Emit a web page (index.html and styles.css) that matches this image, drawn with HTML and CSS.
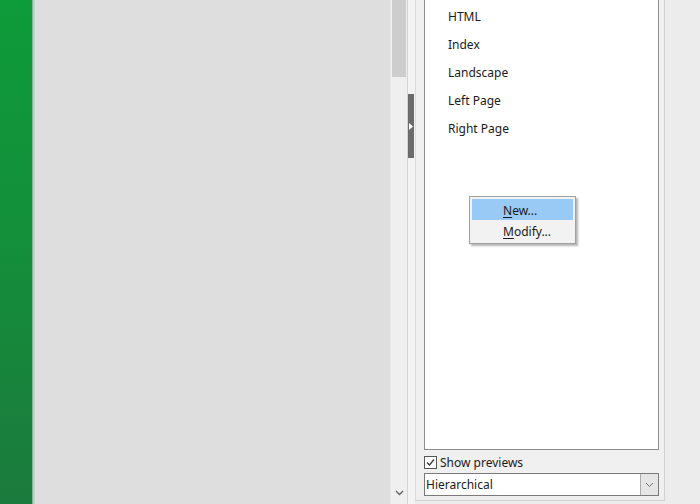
FILE: index.html
```html
<!DOCTYPE html>
<html lang="en">
<head>
    <meta charset="UTF-8">
    <title>Styles</title>
    <link rel="stylesheet" href="styles.css">
</head>
<body>
    <div class="window">
        <div class="ribbon-edge"></div>
        <div class="ribbon-line"></div>
        <div class="doc-area"></div>

        <div class="vscroll">
            <div class="thumb"></div>
            <div class="track"></div>
            <svg class="scroll-arrow" width="9" height="6" viewBox="0 0 9 6">
                <path d="M1 1 L4.5 4.5 L8 1" fill="none" stroke="#606060" stroke-width="1.3"/>
            </svg>
        </div>

        <div class="splitter">
            <div class="grip">
                <svg width="4" height="7" viewBox="0 0 4 7"><path d="M0 0 L4 3.5 L0 7 Z" fill="#fff"/></svg>
            </div>
        </div>

        <div class="sidebar">
            <div class="group">
                <ul class="style-list">
                    <li>HTML</li>
                    <li>Index</li>
                    <li>Landscape</li>
                    <li>Left Page</li>
                    <li>Right Page</li>
                </ul>

                <label class="check-row">
                    <span class="checkbox">
                        <svg width="11" height="11" viewBox="0 0 11 11"><path d="M2 5.5 L4.5 8 L9 2.5" fill="none" stroke="#333" stroke-width="1.2"/></svg>
                    </span>
                    Show previews
                </label>

                <div class="combo">
                    <span class="combo-value">Hierarchical</span>
                    <span class="combo-btn">
                        <svg width="9" height="6" viewBox="0 0 9 6"><path d="M1 1 L4.5 4.5 L8 1" fill="none" stroke="#707070" stroke-width="1"/></svg>
                    </span>
                </div>
            </div>
            <div class="sidebar-rest"></div>

            <div class="context-menu">
                <div class="menu-item active"><u>N</u>ew...</div>
                <div class="menu-item"><u>M</u>odify...</div>
            </div>
        </div>
    </div>
</body>
</html>
```

FILE: styles.css
```css
body {
    margin: 0;
    font-family: "Noto Sans", "Open Sans", sans-serif;
    font-size: 12px;
    color: #1a1a1a;
}

.window {
    display: flex;
    width: 700px;
    height: 504px;
    overflow: hidden;
    background: #f0f0f0;
}

.ribbon-edge {
    width: 32px;
    background: linear-gradient(to bottom, #0e9b3a 0%, #148e3a 50%, #1b7a3d 100%);
}

.ribbon-line {
    width: 3px;
    background: linear-gradient(to right, #6fa883, #b7cdbf, #d6d6d6);
}

.doc-area {
    width: 355px;
    background: #dedede;
}

/* Scrollbar */
.vscroll {
    position: relative;
    width: 17px;
    display: flex;
    flex-direction: column;
    background: #efefef;
    border-left: 1px solid #e6e6e6;
    box-sizing: border-box;
}

.thumb {
    height: 77px;
    margin: 0 1px;
    background: #cdcdcd;
}

.track {
    flex: 1;
}

.scroll-arrow {
    position: absolute;
    bottom: 8px;
    left: 4px;
}

/* Splitter */
.splitter {
    width: 8px;
    display: flex;
    flex-direction: column;
    padding-top: 94px;
    box-sizing: border-box;
    background: #f3f3f3;
    border-left: 1px solid #d4d4d4;
}

.grip {
    width: 6px;
    height: 64px;
    background: #6b6b6b;
    display: flex;
    align-items: center;
    padding-left: 1px;
    box-sizing: border-box;
}

/* Sidebar */
.sidebar {
    position: relative;
    flex: 1;
    display: flex;
    background: #ececec;
}

.group {
    width: 250px;
    height: 501px;
    display: flex;
    flex-direction: column;
    padding: 0 5px 0 8px;
    box-sizing: border-box;
    background: #f0f0f0;
    border-left: 1px solid #dadada;
    border-right: 1px solid #d2d2d2;
    border-bottom: 1px solid #d2d2d2;
}

.style-list {
    list-style: none;
    margin: -2px 0 0;
    padding: 4px 0 0 23px;
    height: 452px;
    box-sizing: border-box;
    background: #fff;
    border: 1px solid #8c8c8c;
}

.style-list li {
    height: 28px;
    line-height: 28px;
}

.check-row {
    display: flex;
    align-items: center;
    gap: 3px;
    height: 23px;
    padding-top: 2px;
    padding-bottom: 1px;
    box-sizing: border-box;
}

.checkbox {
    width: 11px;
    height: 11px;
    border: 1px solid #555;
    background: #fff;
    display: flex;
}

.combo {
    display: flex;
    height: 23px;
    box-sizing: border-box;
    background: #fff;
    border: 1px solid #7a7a7a;
}

.combo-value {
    flex: 1;
    line-height: 21px;
    padding-left: 1px;
}

.combo-btn {
    width: 17px;
    display: flex;
    align-items: center;
    justify-content: center;
    background: #e5e5e5;
    border-left: 1px solid #adadad;
}

.sidebar-rest {
    flex: 1;
}

/* Context menu */
.context-menu {
    position: absolute;
    left: 54px;
    top: 196px;
    width: 107px;
    padding: 2px;
    box-sizing: border-box;
    background: #f2f2f2;
    border: 1px solid #a0a0a0;
    box-shadow: 2px 2px 2px rgba(0, 0, 0, 0.3);
}

.menu-item {
    height: 21px;
    line-height: 23px;
    padding-left: 31px;
    overflow: hidden;
}

.menu-item.active {
    background: #99c9f5;
}

.menu-item u {
    text-decoration-thickness: 1px;
    text-underline-offset: 2px;
}
```
